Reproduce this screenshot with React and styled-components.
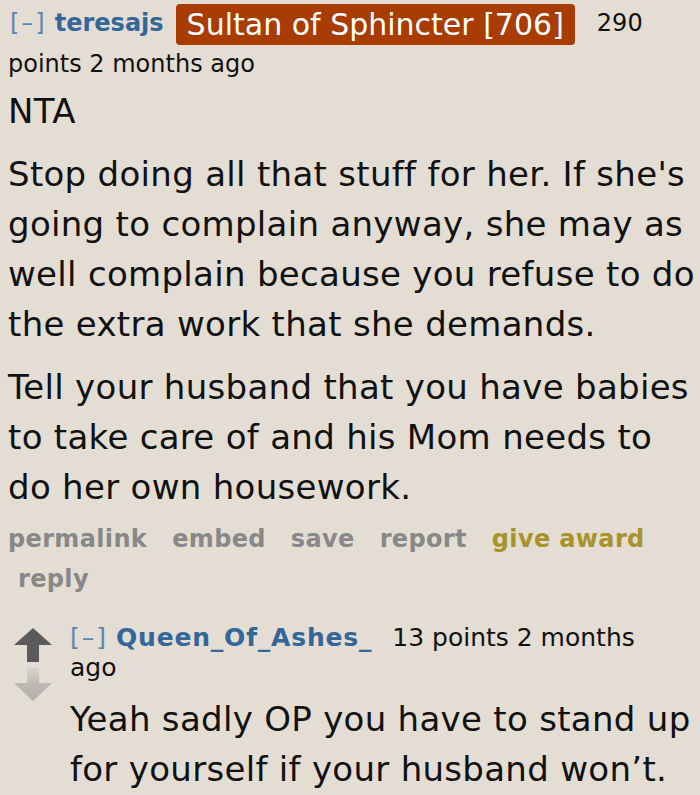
import React from "react";
import styled, { createGlobalStyle } from "styled-components";

const GlobalStyle = createGlobalStyle`
  html, body {
    margin: 0;
    padding: 0;
    background: #e3ddd4;
  }
  body {
    font-family: "DejaVu Sans", "Noto Sans", sans-serif;
    color: #111;
  }
`;

const Comment = styled.div`
  padding: 0 0 0 8px;
`;

const Tagline = styled.div`
  display: flex;
  align-items: center;
  font-size: ${(p) => (p.$child ? "25px" : "24px")};
  line-height: ${(p) => (p.$child ? "32px" : "40px")};
  white-space: nowrap;
`;

const Toggle = styled.span`
  color: #5b86b3;
  letter-spacing: 2px;
  margin-left: ${(p) => (p.$child ? "0" : "2px")};
  margin-right: 8px;
`;

const Author = styled.span`
  color: #336699;
  font-weight: bold;
  letter-spacing: ${(p) => (p.$child ? "0.8px" : "0")};
  margin-right: ${(p) => (p.$child ? "20px" : "12px")};
`;

const Flair = styled.span`
  background: #a83c02;
  color: #fff;
  font-size: 30px;
  line-height: 41px;
  padding: 0 11px;
  border-radius: 4px;
  margin-right: 22px;
  margin-top: 4px;
`;

const Meta = styled.div`
  font-size: ${(p) => (p.$child ? "25px" : "24px")};
  line-height: ${(p) => (p.$child ? "28px" : "38px")};
`;

const Body = styled.div`
  margin-top: ${(p) => (p.$child ? "12px" : "3px")};
  font-size: 34px;
  letter-spacing: 0.3px;
  line-height: 50px;
  max-width: 692px;

  p {
    margin: 0 0 13px;
  }
  p:last-child {
    margin-bottom: 0;
  }
`;

const Actions = styled.ul`
  list-style: none;
  margin: 7px 0 0;
  padding: 0;
  display: flex;
  flex-wrap: wrap;
  column-gap: 25px;
  max-width: 660px;
  font-size: 24px;
  font-weight: bold;
  letter-spacing: 0.35px;
  line-height: 40px;
`;

const Action = styled.li`
  color: ${(p) => (p.$gold ? "#a8922a" : "#888888")};
  margin-left: ${(p) => (p.$indent ? "10px" : "0")};
`;

const Child = styled.div`
  display: flex;
  margin-top: 23px;
  margin-left: 6px;
`;

const Voter = styled.div`
  width: 56px;
  flex-shrink: 0;
  display: flex;
  flex-direction: column;
  padding-top: 6px;
  gap: 4px;
`;

const Entry = styled.div`
  flex: 1;
`;

const UpArrow = () => (
  <svg width="38" height="36" viewBox="0 0 38 36">
    <path d="M19 0 L38 17 L25 17 L25 34 L13 34 L13 17 L0 17 Z" fill="#5a5a5a" />
  </svg>
);

const DownArrow = () => (
  <svg width="38" height="34" viewBox="0 0 38 34">
    <defs>
      <linearGradient id="dn" x1="0" y1="0" x2="0" y2="1">
        <stop offset="0" stopColor="#d8d4ce" />
        <stop offset="0.5" stopColor="#bcb9b4" />
        <stop offset="1" stopColor="#b3b0ab" />
      </linearGradient>
    </defs>
    <path d="M13 0 L25 0 L25 15 L38 15 L19 33 L0 15 L13 15 Z" fill="url(#dn)" />
  </svg>
);

export default function App() {
  return (
    <>
      <GlobalStyle />
      <Comment>
        <Tagline>
          <Toggle>[–]</Toggle>
          <Author>teresajs</Author>
          <Flair>Sultan of Sphincter [706]</Flair>
          <span>290</span>
        </Tagline>
        <Meta>points 2 months ago</Meta>
        <Body>
          <p>NTA</p>
          <p>
            Stop doing all that stuff for her. If she's going to complain anyway,
            she may as well complain because you refuse to do the extra work that
            she demands.
          </p>
          <p>
            Tell your husband that you have babies to take care of and his Mom
            needs to do her own housework.
          </p>
        </Body>
        <Actions>
          <Action>permalink</Action>
          <Action>embed</Action>
          <Action>save</Action>
          <Action>report</Action>
          <Action $gold>give award</Action>
          <Action $indent>reply</Action>
        </Actions>
        <Child>
          <Voter>
            <UpArrow />
            <DownArrow />
          </Voter>
          <Entry>
            <Tagline $child>
              <Toggle $child>[–]</Toggle>
              <Author $child>Queen_Of_Ashes_</Author>
              <span>13 points 2 months</span>
            </Tagline>
            <Meta $child>ago</Meta>
            <Body $child>
              <p>
                Yeah sadly OP you have to stand up for yourself if your husband
                won’t.
              </p>
            </Body>
          </Entry>
        </Child>
      </Comment>
    </>
  );
}
